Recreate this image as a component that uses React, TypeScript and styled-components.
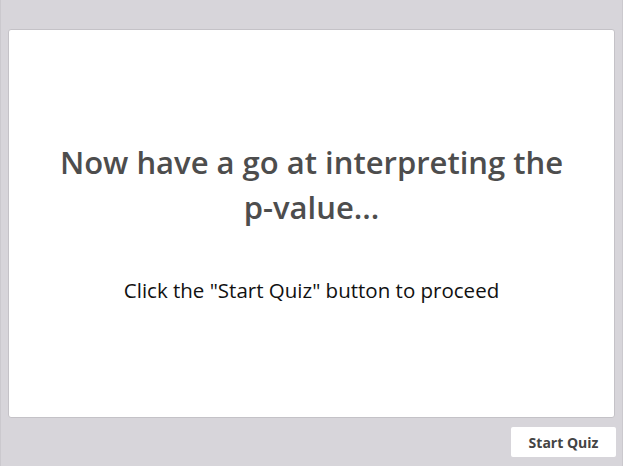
import React from "react";
import styled, { createGlobalStyle } from "styled-components";

const Global = createGlobalStyle`
  html, body { margin: 0; padding: 0; }
  body { font-family: "Open Sans", "Noto Sans", sans-serif; background: #d7d5da; }
`;

const Frame = styled.div`
  width: 623px;
  height: 466px;
  box-sizing: border-box;
  background: #d7d5da;
  padding: 29px 7px 9px 7px;
  display: flex;
  flex-direction: column;
  border-left: 1px solid #cbc9ce;
  border-right: 1px solid #cbc9ce;
`;

const Card = styled.div`
  flex: 0 0 389px;
  box-sizing: border-box;
  background: #ffffff;
  border: 1px solid #c4c2c7;
  border-radius: 3px;
  display: flex;
  flex-direction: column;
  align-items: center;
  padding-top: 110px;
`;

const Heading = styled.h1`
  margin: 0;
  font-size: 31px;
  line-height: 45px;
  font-weight: 600;
  color: #4d4d4d;
  text-align: center;
  width: 540px;
`;

const Instruction = styled.p`
  margin: 48px 0 0 0;
  font-size: 20.5px;
  line-height: 24px;
  color: #111111;
  text-align: center;
`;

const Footer = styled.div`
  display: flex;
  justify-content: flex-end;
  padding-top: 9px;
  margin-right: -1px;
`;

const Button = styled.button`
  width: 105px;
  height: 30px;
  background: #ffffff;
  border: none;
  border-radius: 2px;
  font-family: "Open Sans", sans-serif;
  font-weight: 700;
  font-size: 14px;
  color: #444444;
  cursor: pointer;
  padding: 0;
`;

export default function App() {
  return (
    <>
      <Global />
      <Frame>
        <Card>
          <Heading>Now have a go at interpreting the p-value...</Heading>
          <Instruction>Click the "Start Quiz" button to proceed</Instruction>
        </Card>
        <Footer>
          <Button>Start Quiz</Button>
        </Footer>
      </Frame>
    </>
  );
}
